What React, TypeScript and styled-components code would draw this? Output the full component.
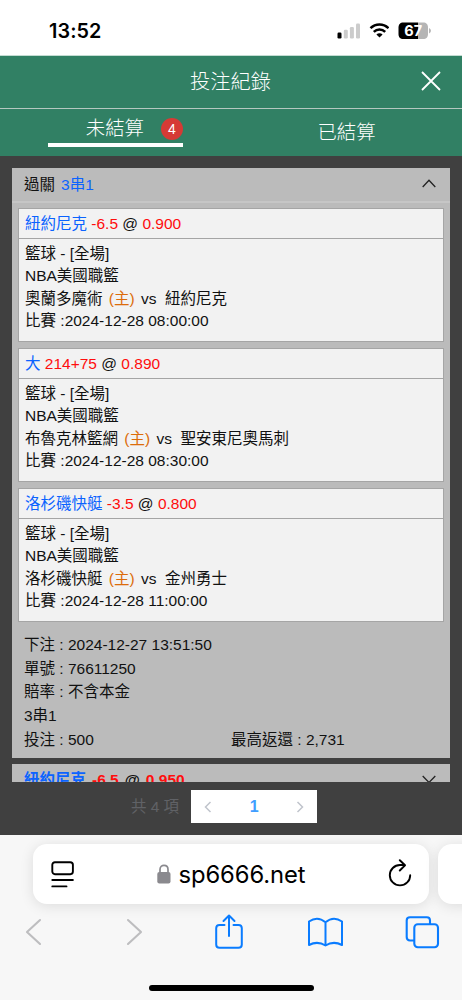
import React, { useState } from "react";
import styled, { createGlobalStyle } from "styled-components";

const GlobalStyle = createGlobalStyle`
  * {
    box-sizing: border-box;
  }
  body {
    margin: 0;
    background-color: #fff;
  }
  svg {
    display: block;
    flex: none;
  }
`;

const Phone = styled.div`
  display: flex;
  flex-direction: column;
  width: 462px;
  height: 1000px;
  overflow: hidden;
  font-family: "Liberation Sans", "Noto Sans CJK TC", sans-serif;
  font-size: 15.5px;
  color: #111;
`;

const StatusBar = styled.div`
  display: flex;
  justify-content: space-between;
  height: 56px;
  padding: 0 31px 0 49px;
  background-color: #fff;
  border-bottom: 1px solid #c3dcd2;
  .time {
    padding-top: 7px;
    line-height: 48px;
    font-family: Inter, sans-serif;
    font-size: 19.8px;
    font-weight: 600;
    letter-spacing: 0.1px;
    color: #000;
  }
`;

const Indicators = styled.div`
  display: flex;
  align-items: center;
  gap: 9px;
  padding-top: 6px;
`;

const Header = styled.div`
  display: grid;
  grid-template-columns: 60px 1fr 60px;
  align-items: center;
  height: 53px;
  padding-right: 1px;
  background-color: #318064;
  border-bottom: 1px solid #b5c8c0;
  color: #fff;
  h1 {
    grid-column: 2;
    margin: 0;
    font-size: 20.2px;
    font-weight: 300;
    line-height: 50px;
    text-align: center;
  }
  svg {
    justify-self: center;
    margin-bottom: 2px;
  }
`;

const Tabs = styled.div`
  display: flex;
  height: 47px;
  flex: none;
  background-color: #318064;
`;

const Tab = styled.div`
  flex: 1;
  display: flex;
  justify-content: center;
  color: #fff;
  font-size: 19.4px;
  font-weight: 300;
  line-height: 46px;
`;

const ActiveLabel = styled.div`
  display: flex;
  align-items: center;
  justify-content: flex-end;
  gap: 17px;
  width: 135px;
  height: 38px;
  padding-top: 4px;
  line-height: 34px;
  border-bottom: 4px solid #fff;
`;

const Badge = styled.span`
  width: 22px;
  height: 22px;
  margin-bottom: -1px;
  border-radius: 50%;
  background-color: #d63a35;
  font-size: 14px;
  font-weight: normal;
  line-height: 22px;
  text-align: center;
`;

const List = styled.div`
  display: flex;
  flex-direction: column;
  gap: 6px;
  height: 626px;
  flex: none;
  padding: 12px 12px 0;
  overflow: hidden;
  background-color: #404040;
`;

const Card = styled.div`
  flex: none;
  background-color: #bbb;
`;

const CardHeader = styled.div<{ $bold?: boolean }>`
  display: flex;
  justify-content: space-between;
  align-items: center;
  height: 35px;
  padding: 0 14px 2px 12px;
  border-bottom: 2px solid #c6c6c6;
  font-weight: ${(props) => (props.$bold ? "bold" : "normal")};
`;

const HeaderText = styled.div`
  display: flex;
  align-items: baseline;
  gap: 6px;
  margin-bottom: 2px;
`;

const Legs = styled.div`
  display: flex;
  flex-direction: column;
  gap: 6px;
  padding: 5px 6px 0;
`;

const Leg = styled.div`
  height: 134px;
  border: 1px solid #a5a5a5;
  background-color: #f2f2f2;
  white-space: pre;
`;

const LegTitle = styled.div`
  height: 30px;
  padding-left: 6px;
  border-bottom: 1px solid #a5a5a5;
  line-height: 29px;
`;

const LegBody = styled.div`
  padding: 4px 0 0 6px;
  line-height: 22.4px;
`;

const Blue = styled.span`
  color: #0b63ff;
`;
const Red = styled.span`
  color: #ff0d0d;
`;
const Home = styled.span`
  margin: 0 2px;
  color: #dc6c0a;
`;

const Summary = styled.div`
  padding: 11px 12px 6px;
  line-height: 23.7px;
  .row {
    display: grid;
    grid-template-columns: 1fr 1fr;
  }
`;

const Pagination = styled.div`
  display: flex;
  justify-content: center;
  height: 53px;
  flex: none;
  padding: 8px 14px 0 0;
  background-color: #404040;
  .total {
    margin-right: 12px;
    line-height: 33px;
    color: #606266;
  }
`;

const Pager = styled.div`
  display: flex;
  justify-content: space-between;
  align-items: center;
  width: 126px;
  height: 33px;
  padding: 0 13px;
  background-color: #fff;
  color: #409eff;
  font-size: 16px;
  font-weight: bold;
`;

const Browser = styled.div`
  flex: 1;
  display: flex;
  flex-direction: column;
  align-items: center;
  background-color: #f7f7f7;
  overflow: hidden;
`;

const AddressRow = styled.div`
  display: flex;
  gap: 9px;
  width: 462px;
  padding: 9px 0 0 33px;
`;

const AddressBar = styled.div`
  display: flex;
  align-items: center;
  justify-content: space-between;
  flex: none;
  width: 396px;
  height: 60px;
  padding: 0 17px 0 18px;
  border-radius: 14px;
  background-color: #fff;
  box-shadow: 0 2px 14px rgba(0, 0, 0, 0.11);
  .reload {
    margin-bottom: 3px;
  }
`;

const Address = styled.div`
  display: flex;
  align-items: center;
  gap: 8px;
  font-family: Inter, sans-serif;
  font-size: 23.8px;
  letter-spacing: -0.1px;
  color: #000;
`;

const Toolbar = styled.div`
  display: flex;
  justify-content: space-between;
  width: 462px;
  padding: 10px 22px 0 16px;
`;

const HomeIndicator = styled.div`
  width: 165px;
  height: 6px;
  margin-top: 35px;
  border-radius: 3px;
  background-color: #000;
`;

const legs = [
  { pick: "紐約尼克", line: "-6.5", odds: "0.900", home: "奧蘭多魔術", away: "紐約尼克", time: "2024-12-28 08:00:00" },
  { pick: "大", line: "214+75", odds: "0.890", home: "布魯克林籃網", away: "聖安東尼奧馬刺", time: "2024-12-28 08:30:00" },
  { pick: "洛杉磯快艇", line: "-3.5", odds: "0.800", home: "洛杉磯快艇", away: "金州勇士", time: "2024-12-28 11:00:00" },
];

const Chevron = ({ d, w, h, color = "#222", stroke = 1.3 }: { d: string; w: number; h: number; color?: string; stroke?: number }) => (
  <svg width={w} height={h} fill="none" stroke={color} strokeWidth={stroke}>
    <path d={d} />
  </svg>
);

function StatusIcons() {
  return (
    <Indicators>
      <svg width="24" height="16" viewBox="0 0 24 16">
        <rect x="1.5" y="9.5" width="4" height="6" rx="1.2" fill="#000" />
        <rect x="7.8" y="6.8" width="4" height="8.7" rx="1.2" fill="#ccc" />
        <rect x="13.9" y="4" width="4" height="11.5" rx="1.2" fill="#ccc" />
        <rect x="20" y="0.5" width="4" height="15" rx="1.2" fill="#ccc" />
      </svg>
      <svg width="20" height="15" viewBox="-0.5 0 20 15" fill="none" stroke="#000" strokeWidth="2.5">
        <path d="M1 5.2C6 0.2 14 0.2 19 5.2" />
        <path d="M4.3 8.8C7.5 5.6 12.5 5.6 15.7 8.8" />
        <path d="M10 14.6L6.9 11.5C8.7 9.9 11.3 9.9 13.1 11.5Z" fill="#000" stroke="none" />
      </svg>
      <svg width="33" height="18" viewBox="0 0 33 18">
        <path d="M5.5 0.5H20V17H5.5C2 17 0.5 15 0.5 12V5.5C0.5 2.5 2 0.5 5.5 0.5Z" fill="#000" />
        <path d="M20 0.5H25C28.5 0.5 30 2.5 30 5.5V12C30 15 28.5 17 25 17H20Z" fill="#b5b5b5" />
        <path d="M31 6Q33 7 33 8.8T31 11.6Z" fill="#b5b5b5" />
        <text x="15.2" y="13.9" textAnchor="middle" fill="#fff" fontFamily="Inter" fontWeight="700" fontSize="14.5">67</text>
      </svg>
    </Indicators>
  );
}

function App() {
  const [open] = useState(true);
  return (
    <Phone>
      <GlobalStyle />
      <StatusBar>
        <span className="time">13:52</span>
        <StatusIcons />
      </StatusBar>
      <Header>
        <h1>投注紀錄</h1>
        <svg width="20" height="20" stroke="#fff" strokeWidth="1.8">
          <path d="M1 1L19 19M19 1L1 19" />
        </svg>
      </Header>
      <Tabs>
        <Tab>
          <ActiveLabel>
            未結算<Badge>4</Badge>
          </ActiveLabel>
        </Tab>
        <Tab>已結算</Tab>
      </Tabs>
      <List>
        <Card>
          <CardHeader>
            <HeaderText>
              <span>過關</span>
              <Blue>3串1</Blue>
            </HeaderText>
            <Chevron w={14} h={9} d="M0.7 8L7 1.3L13.3 8" />
          </CardHeader>
          {open && (
            <>
              <Legs>
                {legs.map((leg) => (
                  <Leg key={leg.time}>
                    <LegTitle>
                      <Blue>{leg.pick}</Blue> <Red>{leg.line}</Red> @ <Red>{leg.odds}</Red>
                    </LegTitle>
                    <LegBody>
                      <div>籃球 - [全場]</div>
                      <div>NBA美國職籃</div>
                      <div>
                        {leg.home} <Home>(主)</Home> vs  {leg.away}
                      </div>
                      <div>比賽 :{leg.time}</div>
                    </LegBody>
                  </Leg>
                ))}
              </Legs>
              <Summary>
                <div>下注 : 2024-12-27 13:51:50</div>
                <div>單號 : 76611250</div>
                <div>賠率 : 不含本金</div>
                <div>3串1</div>
                <div className="row">
                  <span>投注 : 500</span>
                  <span>最高返還 : 2,731</span>
                </div>
              </Summary>
            </>
          )}
        </Card>
        <Card>
          <CardHeader $bold>
            <HeaderText>
              <Blue>紐約尼克</Blue>
              <Red>-6.5</Red>
              <span>@</span>
              <Red>0.950</Red>
            </HeaderText>
            <Chevron w={14} h={9} d="M0.7 1L7 7.5L13.3 1" />
          </CardHeader>
        </Card>
      </List>
      <Pagination>
        <span className="total">共 4 項</span>
        <Pager>
          <Chevron w={8} h={12} d="M6.5 1L1.5 6L6.5 11" color="#c0c4cc" stroke={1.5} />
          <span>1</span>
          <Chevron w={8} h={12} d="M1.5 1L6.5 6L1.5 11" color="#c0c4cc" stroke={1.5} />
        </Pager>
      </Pagination>
      <Browser>
        <AddressRow>
          <AddressBar>
            <svg width="23" height="27" viewBox="0 0 23 27" fill="none" stroke="#000" strokeWidth="1.9" strokeLinecap="round">
              <rect x="1.3" y="1.2" width="20.6" height="12" rx="2.6" />
              <path d="M1.3 19H21.9M1.3 25.4H15.5" />
            </svg>
            <Address>
              <svg width="14" height="20" viewBox="0 0 14 20">
                <path d="M3 9V5.5C3 0 11 0 11 5.5V9" fill="none" stroke="#8a898e" strokeWidth="1.7" />
                <rect x="0.3" y="8" width="13.2" height="11.5" rx="2" fill="#8a898e" />
              </svg>
              sp6666.net
            </Address>
            <svg className="reload" width="24" height="28" viewBox="0 0 24 28" fill="none" stroke="#000" strokeWidth="1.9" strokeLinecap="round" strokeLinejoin="round">
              <path d="M22.2 16.2A10.2 10.2 0 1 1 12 6H16" />
              <path d="M11.8 1.2L17 6.3L11.8 11.5" />
            </svg>
          </AddressBar>
          <AddressBar />
        </AddressRow>
        <Toolbar>
          <svg width="36" height="36" fill="none" stroke="#bdbdbf" strokeWidth="2.1" strokeLinecap="round" strokeLinejoin="round">
            <path d="M24 6L11 18L24 30" />
          </svg>
          <svg width="36" height="36" fill="none" stroke="#bdbdbf" strokeWidth="2.1" strokeLinecap="round" strokeLinejoin="round">
            <path d="M15 6L28 18L15 30" />
          </svg>
          <svg width="36" height="36" fill="none" stroke="#0a7cff" strokeWidth="2" strokeLinecap="round" strokeLinejoin="round">
            <path d="M14.5 11H9.5Q6.2 11 6.2 14.3V30.5Q6.2 33.8 9.5 33.8H28.5Q31.8 33.8 31.8 30.5V14.3Q31.8 11 28.5 11H23.5" />
            <path d="M19 22V1.5M13.5 7L19 1.5L24.5 7" />
          </svg>
          <svg width="36" height="36" fill="none" stroke="#0a7cff" strokeWidth="2" strokeLinecap="round" strokeLinejoin="round">
            <path d="M18.5 8.2Q10.5 1.5 2 7.5V31Q10.5 26.5 18.5 31.5Q26.5 26.5 35 31V7.5Q26.5 1.5 18.5 8.2V31" />
          </svg>
          <svg width="36" height="36" fill="none" stroke="#0a7cff" strokeWidth="2.1" strokeLinejoin="round">
            <rect x="10.3" y="10.3" width="23.7" height="23" rx="3.5" />
            <path d="M10 26.5H6Q2.7 26.5 2.7 23V6.5Q2.7 3.2 6 3.2H22.8Q26 3.2 26 6.5V10" />
          </svg>
        </Toolbar>
        <HomeIndicator />
      </Browser>
    </Phone>
  );
}

export default App;
